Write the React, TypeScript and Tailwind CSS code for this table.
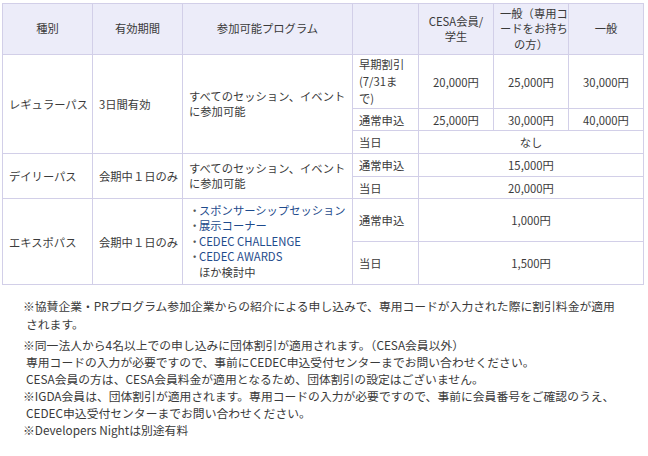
import React from 'react';

const cell = 'border border-[#d2cfe8] px-[6px] py-0 align-middle whitespace-nowrap';
const head = `${cell} bg-[#ececf9] text-center font-normal leading-[15.5px]`;
const price = `${cell} text-center`;

const Bullet = ({ children, link = true }: { children: React.ReactNode; link?: boolean }) => (
  <div className="flex">
    <span className="w-[10px] shrink-0 text-[#555]">{link ? '・' : ''}</span>
    <span className={link ? 'text-[#1e4b8c]' : ''}>{children}</span>
  </div>
);

export default function App() {
  return (
    <div className="w-[648px] h-[456px] bg-white pt-[3px] pl-[2px] text-[#3a3a3a] font-['Noto_Sans_CJK_JP',sans-serif]">
      <table className="border-collapse table-fixed w-[641px] text-[11.3px] leading-[16px]">
        <colgroup>
          <col className="w-[90px]" />
          <col className="w-[90px]" />
          <col className="w-[170px]" />
          <col className="w-[66px]" />
          <col className="w-[75px]" />
          <col className="w-[75px]" />
          <col className="w-[75px]" />
        </colgroup>
        <thead>
          <tr className="h-[51px]">
            <th className={head}>種別</th>
            <th className={head}>有効期間</th>
            <th className={head}>参加可能プログラム</th>
            <th className={head}></th>
            <th className={head}>CESA会員/<br />学生</th>
            <th className={`${head} px-0`}>一般（専用コ<br />ードをお持ち<br />の方）</th>
            <th className={head}>一般</th>
          </tr>
        </thead>
        <tbody>
          <tr className="h-[54px]">
            <td rowSpan={3} className={cell}>レギュラーパス</td>
            <td rowSpan={3} className={cell}>3日間有効</td>
            <td rowSpan={3} className={`${cell} leading-[15.5px]`}>すべてのセッション、イベント<br />に参加可能</td>
            <td className={`${cell} leading-[17px]`}>早期割引<br />(7/31ま<br />で)</td>
            <td className={price}>20,000円</td>
            <td className={price}>25,000円</td>
            <td className={price}>30,000円</td>
          </tr>
          <tr className="h-[22px]">
            <td className={cell}>通常申込</td>
            <td className={price}>25,000円</td>
            <td className={price}>30,000円</td>
            <td className={price}>40,000円</td>
          </tr>
          <tr className="h-[23px]">
            <td className={cell}>当日</td>
            <td colSpan={3} className={price}>なし</td>
          </tr>
          <tr className="h-[23px]">
            <td rowSpan={2} className={cell}>デイリーパス</td>
            <td rowSpan={2} className={cell}>会期中１日のみ</td>
            <td rowSpan={2} className={`${cell} leading-[15.5px]`}>すべてのセッション、イベント<br />に参加可能</td>
            <td className={cell}>通常申込</td>
            <td colSpan={3} className={price}>15,000円</td>
          </tr>
          <tr className="h-[22px]">
            <td className={cell}>当日</td>
            <td colSpan={3} className={price}>20,000円</td>
          </tr>
          <tr className="h-[43px]">
            <td rowSpan={2} className={cell}>エキスポパス</td>
            <td rowSpan={2} className={cell}>会期中１日のみ</td>
            <td rowSpan={2} className={`${cell} leading-[15.5px]`}>
              <Bullet>スポンサーシップセッション</Bullet>
              <Bullet>展示コーナー</Bullet>
              <Bullet>CEDEC CHALLENGE</Bullet>
              <Bullet>CEDEC AWARDS</Bullet>
              <Bullet link={false}>ほか検討中</Bullet>
            </td>
            <td className={cell}>通常申込</td>
            <td colSpan={3} className={price}>1,000円</td>
          </tr>
          <tr className="h-[43px]">
            <td className={cell}>当日</td>
            <td colSpan={3} className={price}>1,500円</td>
          </tr>
        </tbody>
      </table>

      {/* notes */}
      <div className="mt-[12px] text-[11.8px] whitespace-nowrap">
        <p className="pl-[24px] -indent-[3px] leading-[18px]">
          ※協賛企業・PRプログラム参加企業からの紹介による申し込みで、専用コードが入力された際に割引料金が適用<br />されます。
        </p>
        <p className="pl-[24px] -indent-[3px] leading-[17px] mt-[3px]">
          ※同一法人から4名以上での申し込みに団体割引が適用されます。（CESA会員以外）<br />
          専用コードの入力が必要ですので、事前にCEDEC申込受付センターまでお問い合わせください。<br />
          CESA会員の方は、CESA会員料金が適用となるため、団体割引の設定はございません。
        </p>
        <p className="pl-[24px] -indent-[3px] leading-[17px]">
          ※IGDA会員は、団体割引が適用されます。専用コードの入力が必要ですので、事前に会員番号をご確認のうえ、<br />
          CEDEC申込受付センターまでお問い合わせください。
        </p>
        <p className="pl-[24px] -indent-[3px] leading-[17px]">※Developers Nightは別途有料</p>
      </div>
    </div>
  );
}
